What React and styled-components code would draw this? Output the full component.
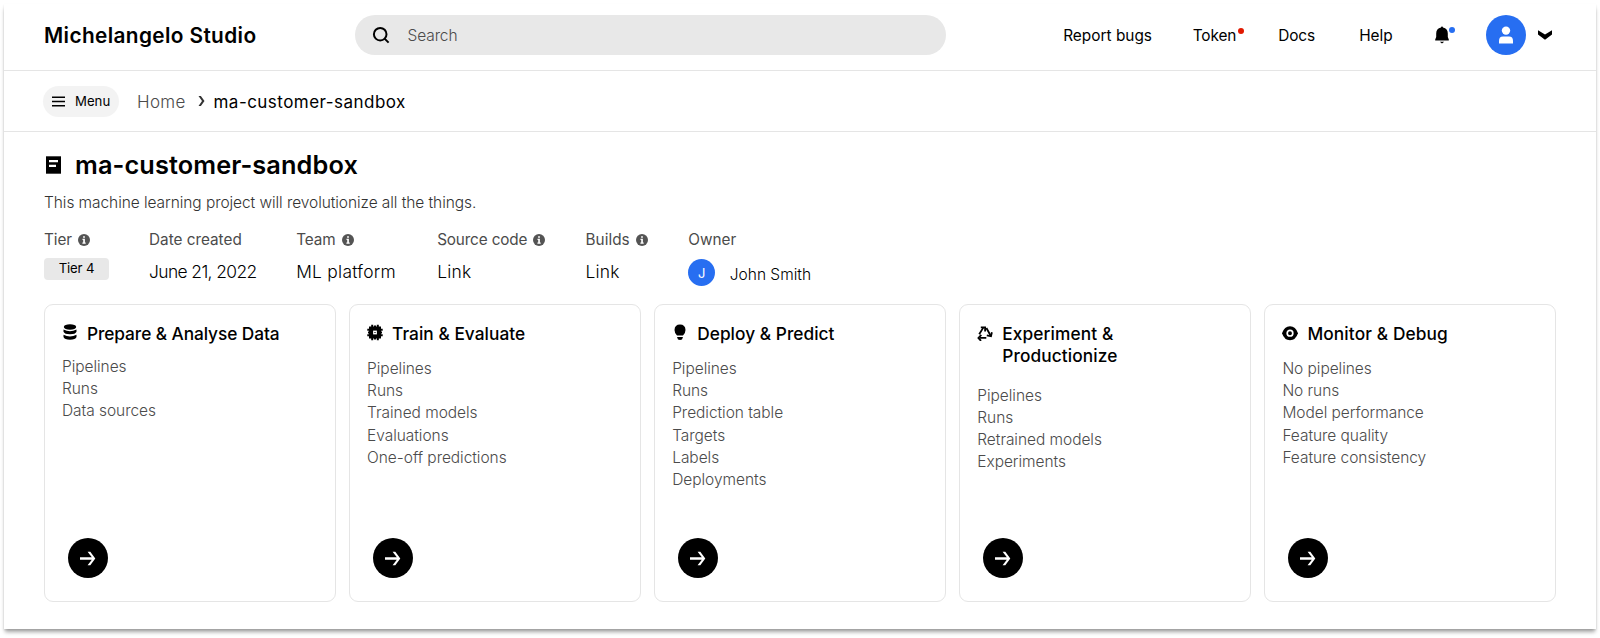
import React from "react";
import styled, { createGlobalStyle } from "styled-components";

const Global = createGlobalStyle`
  * { box-sizing: border-box; }
  html, body { margin: 0; background: #fff; }
  body { font-family: Inter, sans-serif; color: #000; }
  button { font: inherit; border: 0; padding: 0; color: inherit; cursor: pointer; }
  svg { display: block; flex: none; }
`;

const Page = styled.div`
  height: 638px;
  padding: 4px 4px 0;
  overflow: hidden;
`;

const Window = styled.div`
  height: 625px;
  background: #fff;
  box-shadow: 0 4px 4px -1px rgba(0, 0, 0, 0.36), 0 1px 2px rgba(0, 0, 0, 0.09);
`;

const TopBar = styled.header`
  display: flex;
  align-items: center;
  height: 67px;
  padding: 0 44px 5px 40px;
  border-bottom: 1px solid #e5e5e5;
`;

const Brand = styled.div`
  width: 310.6px;
  padding-top: 2px;
  font-size: 20.8px;
  font-weight: 600;
  line-height: 28px;
  letter-spacing: 0.38px;
`;

const SearchBox = styled.label`
  display: flex;
  align-items: center;
  gap: 18px;
  width: 591px;
  height: 40px;
  padding-left: 17px;
  border-radius: 20px;
  background: #e8e8e8;
  font-size: 15.5px;
  font-weight: 300;
  letter-spacing: -0.12px;
  color: #4b4b4b;
`;

const SearchText = styled.span`
  padding-top: 2px;
`;

const Nav = styled.nav`
  display: flex;
  flex: 1;
  padding: 2px 0 0 117.6px;
`;

const NavLink = styled.a`
  position: relative;
  width: ${(p) => p.$width}px;
  font-size: 15.4px;
  line-height: 24px;
  letter-spacing: ${(p) => p.$track ?? 0}px;
  white-space: nowrap;
`;

const Dot = styled.span`
  position: absolute;
  top: ${(p) => p.$top}px;
  left: ${(p) => p.$left}px;
  width: 6px;
  height: 6px;
  border-radius: 50%;
  background: ${(p) => p.$color};
`;

const BellButton = styled.button`
  position: relative;
  width: 14px;
  height: 22px;
  background: none;
`;

const Account = styled.button`
  display: flex;
  align-items: center;
  gap: 12px;
  margin-left: auto;
  background: none;
`;

const Avatar = styled.span`
  display: flex;
  align-items: center;
  justify-content: center;
  width: ${(p) => p.$size}px;
  height: ${(p) => p.$size}px;
  border-radius: 50%;
  background: #276ef1;
  color: #fff;
  font-size: 13px;
  font-weight: 400;
`;

const SubBar = styled.div`
  display: flex;
  align-items: center;
  height: 61px;
  padding: 0 40px 0 39px;
  border-bottom: 1px solid #e5e5e5;
`;

const MenuButton = styled.button`
  display: flex;
  align-items: center;
  gap: 10px;
  width: 76px;
  height: 31px;
  padding-left: 9px;
  border-radius: 16px;
  background: #f3f3f3;
  font-size: 13.2px;
`;

const Crumbs = styled.div`
  display: flex;
  align-items: center;
  margin-left: 18px;
  font-size: 17px;
  line-height: 24px;
`;

const CrumbHome = styled.span`
  width: 60.5px;
  padding-top: 1px;
  font-weight: 300;
  letter-spacing: 0.3px;
  color: #4b4b4b;
`;

const CrumbCurrent = styled.span`
  margin-left: 9px;
  padding-top: 1px;
  letter-spacing: 0.47px;
`;

const Content = styled.main`
  padding: 0 40px;
`;

const TitleRow = styled.div`
  display: flex;
  align-items: center;
  gap: 14px;
  margin-top: 15px;
  padding-left: 2px;
`;

const Title = styled.h1`
  margin: 0;
  font-size: 25.3px;
  font-weight: 600;
  line-height: 36px;
  letter-spacing: 0.12px;
`;

const Description = styled.p`
  margin: 8px 0 0;
  font-size: 15.5px;
  font-weight: 300;
  line-height: 24px;
  letter-spacing: -0.07px;
  color: #333;
`;

const Facts = styled.div`
  display: flex;
  height: 76px;
  margin-top: 13px;
`;

const Fact = styled.div`
  width: ${(p) => p.$width}px;
`;

const FactLabel = styled.div`
  display: flex;
  align-items: center;
  gap: 6px;
  font-size: 15.3px;
  line-height: 24px;
  letter-spacing: ${(p) => p.$track}px;
  color: #4b4b4b;
  white-space: nowrap;
`;

const FactValue = styled.div`
  margin-top: 8px;
  font-size: 17.4px;
  font-weight: 300;
  line-height: 24px;
  letter-spacing: ${(p) => p.$track}px;
  white-space: nowrap;
`;

const Tag = styled.div`
  width: 65px;
  height: 22px;
  margin-top: 6px;
  border-radius: 4px;
  background: #e8e8e8;
  font-size: 13.2px;
  line-height: 21.5px;
  letter-spacing: -0.15px;
  text-align: center;
`;

const Owner = styled.div`
  display: flex;
  align-items: center;
  gap: 14.5px;
  margin-top: 7px;
  font-size: 15.5px;
  font-weight: 300;
  white-space: nowrap;
`;

const OwnerName = styled.span`
  padding-top: 3px;
`;

const Cards = styled.div`
  display: grid;
  grid-template-columns: repeat(5, 1fr);
  gap: 13.5px;
`;

const CardBox = styled.section`
  display: flex;
  flex-direction: column;
  height: 298px;
  padding: 18px 17px 23px;
  border: 1px solid #e5e5e5;
  border-radius: 9px;
`;

const CardHead = styled.div`
  display: flex;
  gap: 8px;
`;

const IconSlot = styled.span`
  width: 17px;
  padding-top: 1px;
`;

const CardTitle = styled.h2`
  margin: 0;
  font-size: 17.3px;
  font-weight: 500;
  line-height: 22.3px;
  letter-spacing: ${(p) => p.$track}px;
  white-space: pre-line;
`;

const List = styled.ul`
  margin: ${(p) => p.$gap}px 0 0;
  padding: 0;
  list-style: none;
`;

const Item = styled.li`
  font-size: 15.5px;
  font-weight: 300;
  line-height: 22.1px;
  letter-spacing: -0.05px;
  color: #4b4b4b;
`;

const GoButton = styled.button`
  display: flex;
  align-items: center;
  justify-content: center;
  width: 40px;
  height: 40px;
  margin: auto 0 0 6px;
  border-radius: 50%;
  background: #000;
`;

const InfoIcon = () => (
  <svg width="12" height="12" viewBox="0 0 12 12">
    <circle cx="6" cy="6" r="6" fill="#545454" />
    <path d="M5.1 2.2h1.8v1.6H5.1zM4.500 4.800h2.400v3.600h.8v1.300H4.400V8.400h.8V6.100h-.7z" fill="#fff" />
  </svg>
);

const SearchIcon = () => (
  <svg width="18" height="18" viewBox="0 0 18 18" fill="none" stroke="#000" strokeWidth="2">
    <circle cx="8.200" cy="8.200" r="6.300" />
    <path d="M12.600 12.600l4 4" />
  </svg>
);

const BellIcon = () => (
  <svg width="14" height="18" viewBox="0 0 14 18">
    <path d="M6 1.600Q6 .6 7 .6t1 1q4.800.8 4.800 6V11l1 2.600v.8H.2v-.8l1-2.600V7.600q0-5.200 4.800-6zM4.800 15.800h4.400L7 17.600z" />
  </svg>
);

const PersonIcon = () => (
  <svg width="14" height="18" viewBox="0 0 14 18" fill="#fff">
    <circle cx="7" cy="4.600" r="4.200" />
    <path d="M0 17.500v-2.700Q0 10.500 4 10.500h6q4 0 4 4.300v2.700z" />
  </svg>
);

const ChevronDown = () => (
  <svg width="14" height="10" viewBox="0 0 14 10">
    <path d="M0 .3l7 4.200 7-4.200v4.200L7 9.800 0 4.500z" />
  </svg>
);

const MenuIcon = () => (
  <svg width="13" height="11" viewBox="0 0 13 11">
    <path d="M0 .5h13v1.600H0zM0 4.700h13v1.600H0zM0 8.900h13v1.600H0z" />
  </svg>
);

const CrumbArrow = () => (
  <svg width="7" height="10" viewBox="0 0 7 10">
    <path d="M.5 0h2.400l3.600 5-3.600 5H.5L4 5z" fill="#333" />
  </svg>
);

const ProjectIcon = () => (
  <svg width="15" height="18" viewBox="0 0 15 18">
    <path d="M0 .3h15v17.400H0z" />
    <path d="M3 4h9v2.200H3zM3 8.700h7v2.200H3z" fill="#fff" />
  </svg>
);

const DataIcon = () => (
  <svg width="15" height="17" viewBox="0 0 15 17">
    <ellipse cx="8" cy="3" rx="6.200" ry="2.700" />
    <path d="M1.500 5.600q6.500 3.400 13 0v2.200q-1 2.500-6.500 2.500T1.500 7.800zM1.500 10.800q6.500 3.400 13 0V13q-1 2.800-6.500 2.800T1.500 13z" />
  </svg>
);

const ChipIcon = () => (
  <svg width="16" height="17" viewBox="0 0 16 17">
    <path d="M2 2.500h12v12H2z" />
    <path d="M5.200.8v15.400M8 1.500v14M10.800.8v15.400M.3 5.700h15.400M.3 11.300h15.400M1 8.500h14" stroke="#000" strokeWidth="2" />
    <path d="M6.100 6.600h3.800v3.800H6.100z" fill="#fff" />
    <path d="M7.400 7.900h1.200v1.200H7.400z" />
  </svg>
);

const BulbIcon = () => (
  <svg width="16" height="17" viewBox="0 0 16 17">
    <path d="M5 11.600Q2.500 9 2.500 6 2.700.5 8 .5T13.500 6q0 3-2.500 5.600zM5 13h6l-1 2.600q-2 .9-4 0z" />
  </svg>
);

const CycleIcon = () => (
  <svg width="16" height="17" viewBox="0 0 16 17" fill="none" stroke="#000" strokeWidth="1.800">
    <path d="M2.200 10.200L6.300 3.600M9.400 4l4 7.200M3 13.900h6.300" />
    <path d="M3.800 3.300h4.300v4.200M14.900 8.200l-.9 4.100-4.200-.9M4.300 10.800L1.400 13.900l2.600 3" />
  </svg>
);

const EyeIcon = () => (
  <svg width="16" height="17" viewBox="0 0 16 17">
    <path d="M0 9.200Q2.400 2.200 8 2.200t8 7q-2.400 7-8 7t-8-7z" />
    <circle cx="8" cy="9.200" r="2.800" fill="none" stroke="#fff" strokeWidth="1.700" />
  </svg>
);

const ArrowIcon = () => (
  <svg width="16" height="15" viewBox="0 0 16 15">
    <path d="M0 6.300h11.800L7.600.8h2.700l5 6.700-5 6.700H7.600l4.200-5.400H0z" fill="#fff" />
  </svg>
);

const cards = [
  { title: "Prepare & Analyse Data", track: -0.08, gap: 11, Icon: DataIcon, items: ["Pipelines", "Runs", "Data sources"] },
  { title: "Train & Evaluate", track: 0.04, gap: 13, Icon: ChipIcon, items: ["Pipelines", "Runs", "Trained models", "Evaluations", "One-off predictions"] },
  { title: "Deploy & Predict", track: 0.04, gap: 13, Icon: BulbIcon, items: ["Pipelines", "Runs", "Prediction table", "Targets", "Labels", "Deployments"] },
  { title: "Experiment &\nProductionize", track: 0.1, gap: 17.2, Icon: CycleIcon, items: ["Pipelines", "Runs", "Retrained models", "Experiments"] },
  { title: "Monitor & Debug", track: 0.12, gap: 13, Icon: EyeIcon, items: ["No pipelines", "No runs", "Model performance", "Feature quality", "Feature consistency"] },
];

const facts = [
  { label: "Tier", width: 105, track: -0.1, info: true, tag: "Tier 4" },
  { label: "Date created", width: 147.2, track: 0, value: "June 21, 2022", valueTrack: -0.6 },
  { label: "Team", width: 141, track: -0.1, info: true, value: "ML platform", valueTrack: 0.27 },
  { label: "Source code", width: 148.3, track: -0.15, info: true, value: "Link", valueTrack: 0.2 },
  { label: "Builds", width: 102.8, track: 0.05, info: true, value: "Link", valueTrack: 0.2 },
  { label: "Owner", width: 200, track: 0, owner: "John Smith" },
];

export default function App() {
  return (
    <Page>
      <Global />
      <Window>
        <TopBar>
          <Brand>Michelangelo Studio</Brand>
          <SearchBox>
            <SearchIcon />
            <SearchText>Search</SearchText>
          </SearchBox>
          <Nav>
            <NavLink $width={129.6}>Report bugs</NavLink>
            <NavLink $width={85.4} $track={-0.15}>
              Token
              <Dot $color="#e11900" $top={4} $left={45} />
            </NavLink>
            <NavLink $width={81} $track={-0.1}>Docs</NavLink>
            <NavLink $width={75.6}>Help</NavLink>
            <BellButton aria-label="Notifications">
              <BellIcon />
              <Dot $color="#276ef1" $top={3} $left={14} />
            </BellButton>
          </Nav>
          <Account aria-label="Account">
            <Avatar $size={40}>
              <PersonIcon />
            </Avatar>
            <ChevronDown />
          </Account>
        </TopBar>
        <SubBar>
          <MenuButton>
            <MenuIcon />
            Menu
          </MenuButton>
          <Crumbs>
            <CrumbHome>Home</CrumbHome>
            <CrumbArrow />
            <CrumbCurrent>ma-customer-sandbox</CrumbCurrent>
          </Crumbs>
        </SubBar>
        <Content>
          <TitleRow>
            <ProjectIcon />
            <Title>ma-customer-sandbox</Title>
          </TitleRow>
          <Description>This machine learning project will revolutionize all the things.</Description>
          <Facts>
            {facts.map((f) => (
              <Fact key={f.label} $width={f.width}>
                <FactLabel $track={f.track}>
                  {f.label}
                  {f.info && <InfoIcon />}
                </FactLabel>
                {f.tag && <Tag>{f.tag}</Tag>}
                {f.value && <FactValue $track={f.valueTrack}>{f.value}</FactValue>}
                {f.owner && (
                  <Owner>
                    <Avatar $size={27}>J</Avatar>
                    <OwnerName>{f.owner}</OwnerName>
                  </Owner>
                )}
              </Fact>
            ))}
          </Facts>
          <Cards>
            {cards.map(({ title, track, gap, Icon, items }) => (
              <CardBox key={title}>
                <CardHead>
                  <IconSlot>
                    <Icon />
                  </IconSlot>
                  <CardTitle $track={track}>{title}</CardTitle>
                </CardHead>
                <List $gap={gap}>
                  {items.map((item) => (
                    <Item key={item}>{item}</Item>
                  ))}
                </List>
                <GoButton aria-label={title}>
                  <ArrowIcon />
                </GoButton>
              </CardBox>
            ))}
          </Cards>
        </Content>
      </Window>
    </Page>
  );
}
